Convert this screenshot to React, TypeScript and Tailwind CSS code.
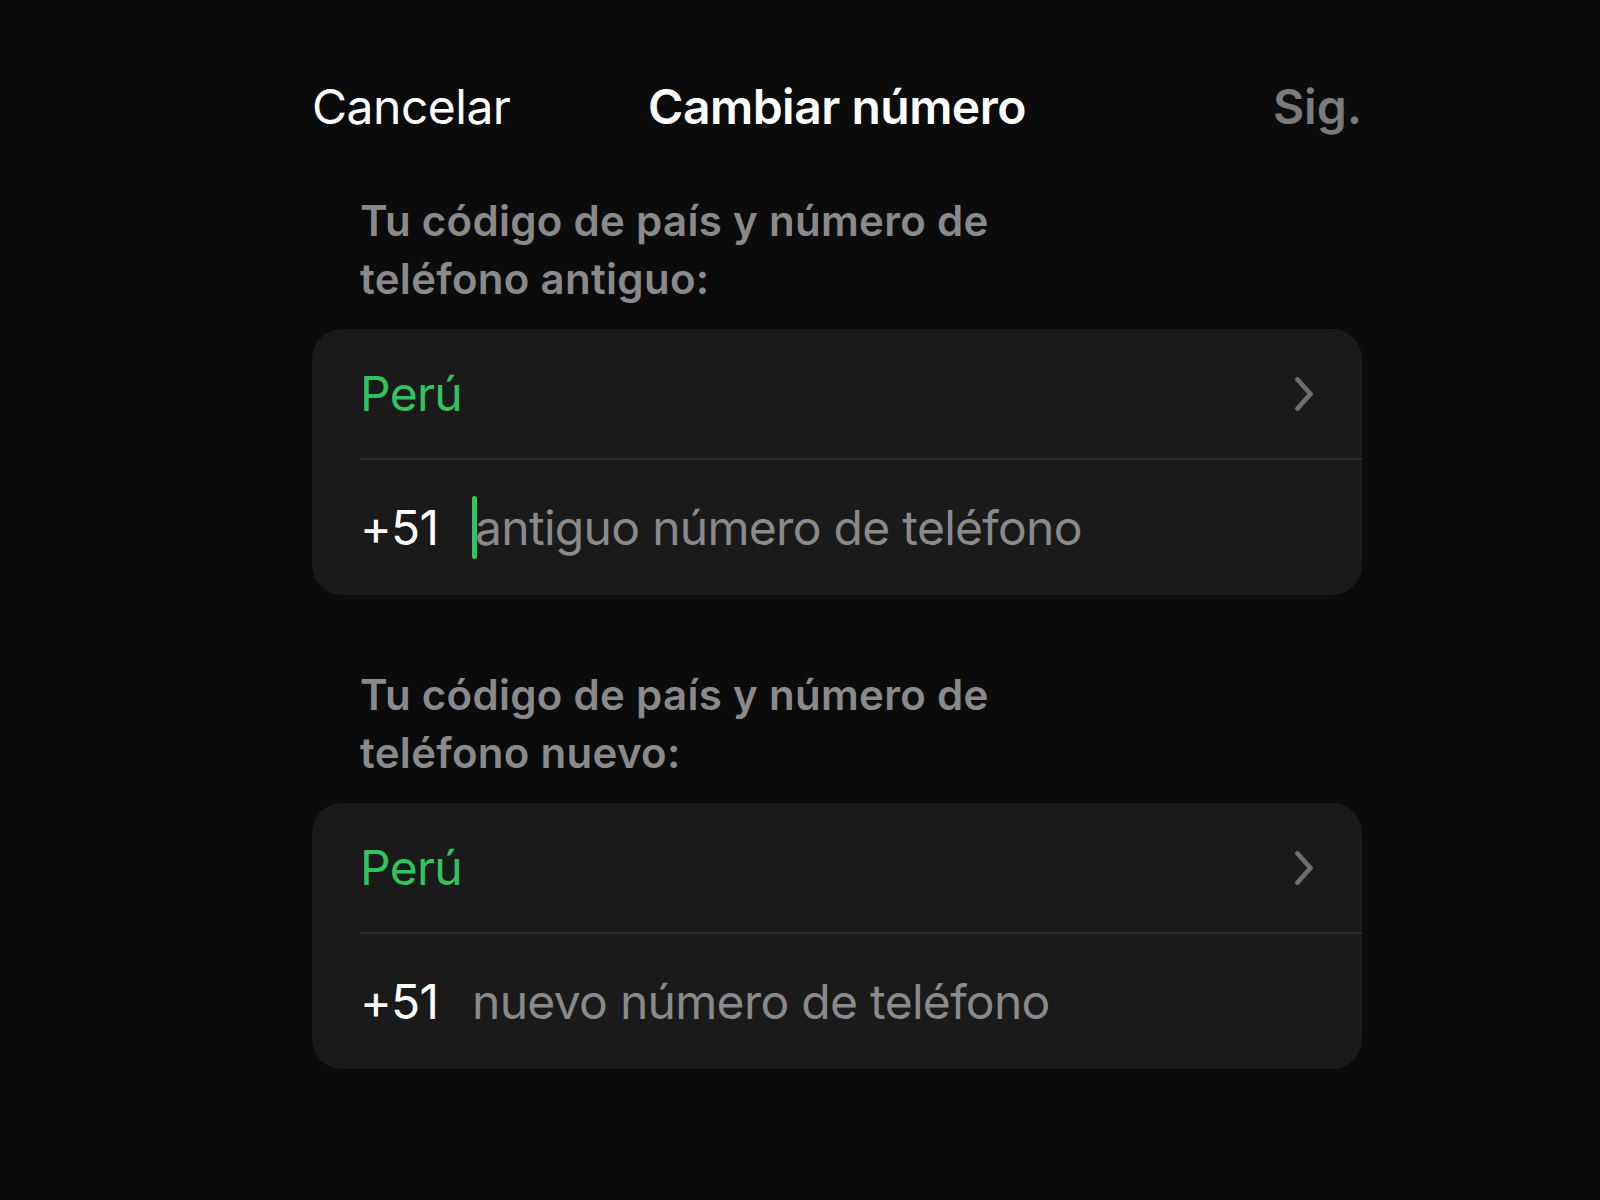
import React from 'react';

function Chevron() {
    return (
        <svg width="22" height="36" viewBox="0 0 22 36" fill="none" className="shrink-0">
            <path d="M4.5 3.5 L17.5 18 L4.5 32.5" stroke="#6e6e70" strokeWidth="4.8" strokeLinecap="round" strokeLinejoin="round" />
        </svg>
    );
}

function PhoneCard({ placeholder, focused }: { placeholder: string; focused?: boolean }) {
    return (
        <div className="bg-[#1a1a1a] rounded-[30px] overflow-hidden">
            {/* Country row */}
            <div className="h-[129px] pl-[48px] pr-[47px] flex items-center justify-between">
                <span className="text-[48px] text-[#30c55e] tracking-[-0.7px]">Perú</span>
                <Chevron />
            </div>
            <div className="ml-[48px] h-[2px] bg-[#2b2b2b]" />
            {/* Number row */}
            <div className="h-[135px] pl-[48px] flex items-center">
                <span className="text-[48px] text-white w-[112px] tracking-[-0.7px]">+51</span>
                <div className="flex items-center">
                    {focused && <div className="w-[5px] h-[63px] bg-[#30c55e] rounded-full -mr-[2px]" />}
                    <span className="text-[48px] text-[#8a8a8c] tracking-[-0.7px]">{placeholder}</span>
                </div>
            </div>
        </div>
    );
}

export default function App() {
    return (
        <div
            className="min-h-screen bg-[#0b0b0b] antialiased"
            style={{ fontFamily: "Inter, 'Noto Sans', sans-serif" }}
        >
            <div className="w-[1050px] ml-[312px] pt-[63px]">
                {/* Nav bar */}
                <div className="h-[88px] flex items-center justify-between">
                    <span className="text-[48px] text-white tracking-[-0.5px] w-[260px]">Cancelar</span>
                    <span className="text-[48px] text-white font-semibold tracking-[-0.5px]">Cambiar número</span>
                    <span className="text-[48px] text-[#7b7b7d] font-semibold w-[260px] text-right">Sig.</span>
                </div>

                <div className="pt-[41px]">
                    <p className="pl-[48px] text-[42px] leading-[58px] font-semibold text-[#8a8a8c] tracking-[0.3px]">
                        Tu código de país y número de<br />teléfono antiguo:
                    </p>
                    <div className="mt-[21px]">
                        <PhoneCard placeholder="antiguo número de teléfono" focused />
                    </div>
                </div>

                <div className="pt-[71px]">
                    <p className="pl-[48px] text-[42px] leading-[58px] font-semibold text-[#8a8a8c] tracking-[0.3px]">
                        Tu código de país y número de<br />teléfono nuevo:
                    </p>
                    <div className="mt-[21px]">
                        <PhoneCard placeholder="nuevo número de teléfono" />
                    </div>
                </div>
            </div>
        </div>
    );
}
